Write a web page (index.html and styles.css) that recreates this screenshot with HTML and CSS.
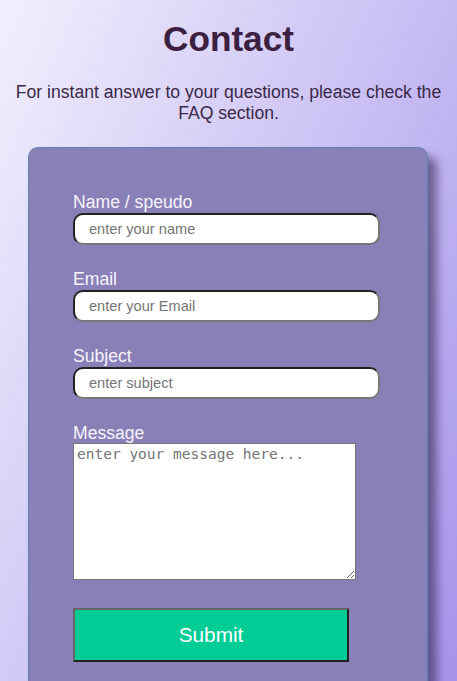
FILE: index.html
```html
<!DOCTYPE html>
<html lang="en">
<head>
<meta charset="utf-8">
<title>Contact</title>
<link rel="stylesheet" href="styles.css">
</head>
<body>
  <h1 class="title">Contact</h1>
  <p class="intro">For instant answer to your questions, please check the FAQ section.</p>
  <form class="card">
    <label class="label" for="name">Name / speudo</label>
    <input class="field" id="name" type="text" placeholder="enter your name">
    <label class="label" for="email">Email</label>
    <input class="field" id="email" type="email" placeholder="enter your Email">
    <label class="label" for="subject">Subject</label>
    <input class="field" id="subject" type="text" placeholder="enter subject">
    <label class="label" for="message">Message</label>
    <textarea class="message" id="message" placeholder="enter your message here..."></textarea>
    <button class="submit" type="button">Submit</button>
  </form>
</body>
</html>
```

FILE: styles.css
```css
html {
  min-height: 100%;
  background: linear-gradient(115deg, #f2f0fd 0%, #cfc6f5 45%, #a391ea 100%);
}
body {
  margin: 0;
  padding: 18px 0 0;
  font-family: "Liberation Sans", Arial, sans-serif;
  overflow: hidden;
}
.title {
  margin: 0;
  text-align: center;
  font-size: 35.2px;
  line-height: 41px;
  font-weight: bold;
  color: #3b2040;
}
.intro {
  margin: 23px 0 0;
  text-align: center;
  font-size: 17.6px;
  line-height: 21px;
  color: #3a2848;
}
.card {
  box-sizing: border-box;
  width: 400px;
  margin: 23px 0 0 28px;
  padding: 43px 44px 60px;
  background: #8a80b8;
  border: 1px dotted #2f86b0;
  border-radius: 10px;
  box-shadow: 9px 9px 10px rgba(40, 30, 70, 0.55);
  display: flex;
  flex-direction: column;
  align-items: flex-start;
}
.label {
  font-size: 17.6px;
  line-height: 22px;
  color: #f6f4fb;
}
.field {
  box-sizing: border-box;
  width: 307px;
  height: 32px;
  margin: 0 0 23px;
  padding: 0 14px;
  font-family: "Liberation Sans", Arial, sans-serif;
  font-size: 14.6px;
  background: #fff;
  border: 2px solid;
  border-color: #222 #777 #777 #222;
  border-radius: 10px;
  outline: none;
}
.field::placeholder {
  color: #757575;
}
.message {
  box-sizing: border-box;
  width: 283px;
  height: 137px;
  margin: -1px 0 0;
  padding: 2px 3px;
  font-family: "DejaVu Sans Mono", monospace;
  font-size: 14.5px;
  border: 1px solid #767676;
  background: #fff;
}
.message::placeholder {
  color: #757575;
}
.submit {
  box-sizing: border-box;
  width: 276px;
  height: 54px;
  margin-top: 28px;
  background: #00cc96;
  color: #fff;
  font-family: "Liberation Sans", Arial, sans-serif;
  font-size: 20.8px;
  border: 2px solid;
  border-color: #666 #222 #222 #666;
}
```
